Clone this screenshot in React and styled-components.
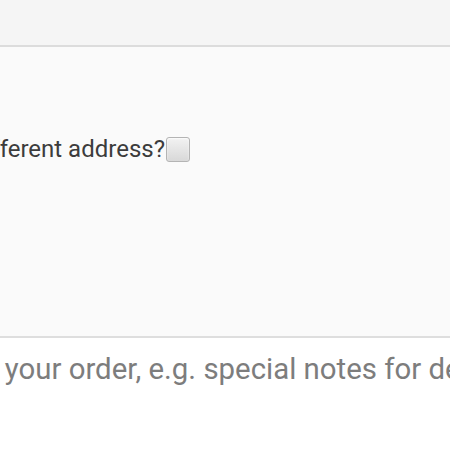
import React from "react";
import styled, { createGlobalStyle } from "styled-components";

const Global = createGlobalStyle`
  html, body {
    margin: 0;
    padding: 0;
    background: #ffffff;
    overflow: hidden;
  }
  body {
    font-family: Roboto, "Noto Sans", sans-serif;
  }
`;

const Page = styled.div`
  width: 450px;
  height: 450px;
  display: flex;
  flex-direction: column;
  overflow: hidden;
`;

const TopBar = styled.div`
  height: 45px;
  flex-shrink: 0;
  background: #f5f5f5;
  border-bottom: 2px solid #dcdcdc;
  box-shadow: 0 2px 6px rgba(0, 0, 0, 0.05);
`;

const Panel = styled.div`
  height: 291px;
  flex-shrink: 0;
  background: #fafafa;
  border-bottom: 2px solid #dedede;
  padding-top: 89px;
  box-sizing: border-box;
`;

const HeadingRow = styled.div`
  width: 190px;
  display: flex;
  justify-content: flex-end;
`;

const Heading = styled.h3`
  margin: 0;
  flex-shrink: 0;
  display: flex;
  align-items: center;
  font-size: 24px;
  line-height: 26px;
  font-weight: 400;
  color: #3c3c3c;
  white-space: nowrap;
`;

const Check = styled.input`
  appearance: none;
  width: 24px;
  height: 25px;
  margin: 0 0 0 1px;
  border: 1px solid #b4b4b4;
  border-radius: 3px;
  background: linear-gradient(#f2f2f2, #d8d8d8);
  box-shadow: inset 0 1px 2px rgba(255, 255, 255, 0.8);
`;

const Notes = styled.textarea`
  display: block;
  margin-left: -163px;
  width: 800px;
  height: 100px;
  border: 0;
  background: transparent;
  resize: none;
  padding: 14px 0 0 0;
  font-family: Roboto, "Noto Sans", sans-serif;
  font-size: 29.4px;
  line-height: 34px;
  outline: none;
  white-space: nowrap;
  overflow: hidden;
  &::placeholder {
    color: #7d7d7d;
  }
`;

export default function App() {
  return (
    <>
      <Global />
      <Page>
        <TopBar />
        <Panel>
          <HeadingRow>
            <Heading>
              Ship to a different address?
              <Check type="checkbox" />
            </Heading>
          </HeadingRow>
        </Panel>
        <Notes placeholder="Notes about your order, e.g. special notes for delivery." />
      </Page>
    </>
  );
}
